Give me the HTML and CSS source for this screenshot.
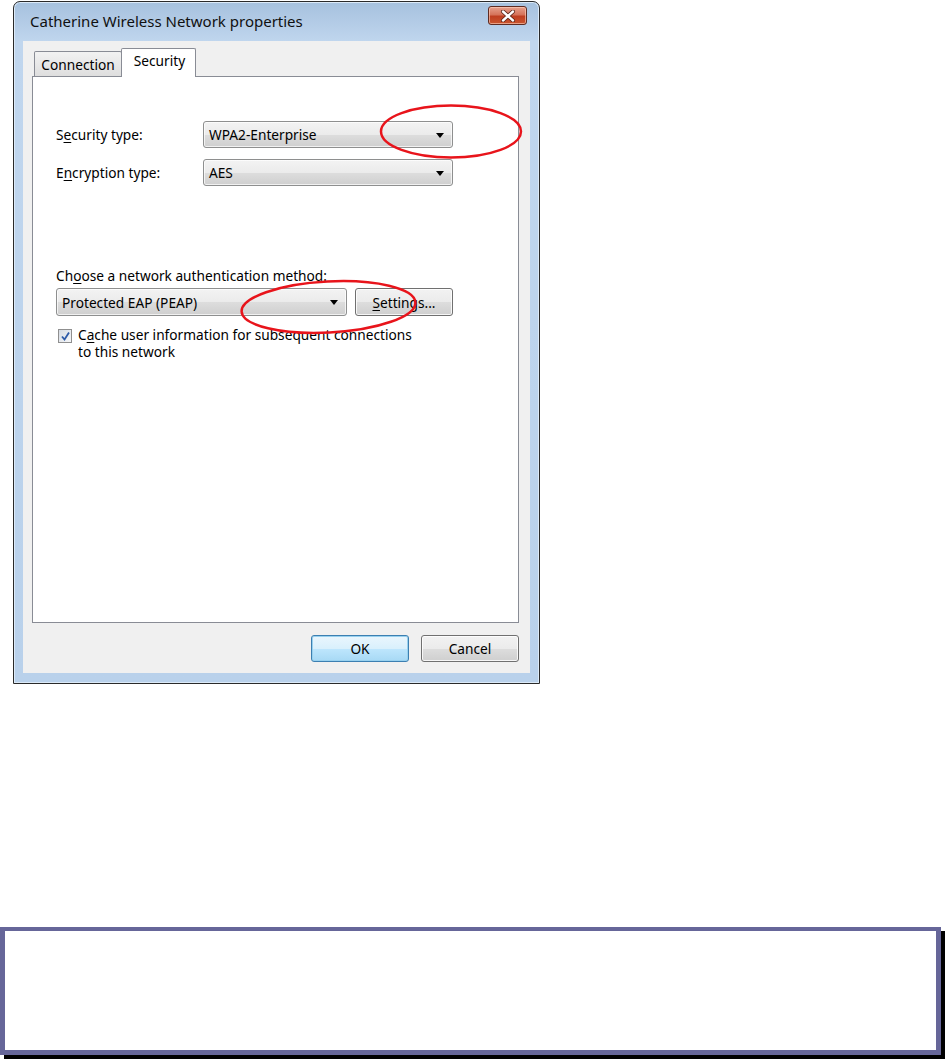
FILE: index.html
```html
<!DOCTYPE html>
<html lang="en">
<head>
    <meta charset="UTF-8">
    <meta name="viewport" content="width=device-width, initial-scale=1.0">
    <title>Catherine Wireless Network properties</title>
    <link rel="stylesheet" href="styles.css">
</head>
<body>
    <div class="window">
        <div class="titlebar">
            <span class="title">Catherine Wireless Network properties</span>
            <button class="close" title="Close">
                <svg width="16" height="12" viewBox="0 0 16 12">
                    <path d="M3 1.5 L13 10.5 M13 1.5 L3 10.5" stroke="#5a2418" stroke-width="4" stroke-linecap="round"/>
                    <path d="M3 1.5 L13 10.5 M13 1.5 L3 10.5" stroke="#ffffff" stroke-width="2.4" stroke-linecap="round"/>
                </svg>
            </button>
        </div>
        <div class="client">
            <div class="tabs">
                <div class="tab">Connection</div>
                <div class="tab selected">Security</div>
            </div>
            <div class="page">
                <div class="fields">
                    <label>S<u>e</u>curity type:</label>
                    <div class="combo">WPA2-Enterprise<span class="arrow"></span></div>
                    <label>E<u>n</u>cryption type:</label>
                    <div class="combo">AES<span class="arrow"></span></div>
                </div>
                <div class="method">Ch<u>o</u>ose a network authentication method:</div>
                <div class="methodrow">
                    <div class="combo wide">Protected EAP (PEAP)<span class="arrow"></span></div>
                    <button class="btn settings"><u>S</u>ettings...</button>
                </div>
                <div class="check">
                    <span class="box">
                        <svg width="11" height="11" viewBox="0 0 11 11">
                            <path d="M2 5.5 L4.5 8.5 L9 1.5" fill="none" stroke="#2d5aa8" stroke-width="1.8"/>
                        </svg>
                    </span>
                    <span>C<u>a</u>che user information for subsequent connections<br>to this network</span>
                </div>
            </div>
            <div class="buttons">
                <button class="btn default">OK</button>
                <button class="btn">Cancel</button>
            </div>
        </div>
    </div>

    <svg class="marks" width="560" height="360" viewBox="0 0 560 360">
        <ellipse cx="451" cy="131.5" rx="70" ry="26" fill="none" stroke="#e8141b" stroke-width="2.5"/>
        <ellipse cx="328.5" cy="307" rx="87" ry="25.5" fill="none" stroke="#e8141b" stroke-width="2.5" transform="rotate(-3 328.5 307)"/>
    </svg>

    <div class="note"></div>
</body>
</html>
```

FILE: styles.css
```css
body {
    margin: 0;
    background-color: white;
    font-family: 'Noto Sans', 'Open Sans', sans-serif;
    font-size: 13.7px;
    color: #000;
    position: relative;
    height: 1059px;
    overflow: hidden;
}
u {
    text-decoration-thickness: 1px;
    text-underline-offset: 2px;
}
.window {
    margin: 1px 0 0 13px;
    width: 525px;
    height: 681px;
    border: 1px solid #2a2a2a;
    border-radius: 7px 7px 0 0;
    background: linear-gradient(#a6c1de 0px, #c0d6ee 40px, #b9d1eb 100%);
    box-shadow: inset 0 0 0 1px #dceaf8;
    display: flex;
    flex-direction: column;
}
.titlebar {
    height: 39px;
    flex-shrink: 0;
    display: flex;
    align-items: center;
    padding: 0 12px 0 16px;
}
.title {
    font-size: 15px;
    flex: 1;
    margin-top: -2px;
    color: #101010;
}
.close {
    width: 39px;
    height: 19px;
    margin-top: -12px;
    padding: 0;
    border: 1px solid #5e2b22;
    border-radius: 3px;
    background: linear-gradient(#e7a08c 0%, #d5735a 45%, #bf3e20 55%, #c9552e 100%);
    box-shadow: inset 0 0 0 1px rgba(255, 210, 190, 0.6);
    display: flex;
    align-items: center;
    justify-content: center;
}
.client {
    flex: 1;
    margin: 0 9px 10px 9px;
    background-color: #f0f0f0;
    padding: 7px 11px 0 9px;
    display: flex;
    flex-direction: column;
}
.tabs {
    display: flex;
    align-items: flex-end;
    padding-left: 2px;
    height: 28px;
    flex-shrink: 0;
    position: relative;
    z-index: 1;
}
.tab {
    height: 25px;
    width: 88px;
    box-sizing: border-box;
    border: 1px solid #898c95;
    border-bottom: none;
    border-radius: 2px 2px 0 0;
    background: linear-gradient(#f2f2f2, #dedede);
    display: flex;
    align-items: center;
    justify-content: center;
    padding-top: 1px;
}
.tab.selected {
    width: 75px;
    height: 29px;
    margin-left: -1px;
    margin-bottom: -1px;
    background: #fff;
    padding-top: 0;
    padding-bottom: 6px;
    padding-left: 2px;
}
.page {
    height: 547px;
    flex-shrink: 0;
    box-sizing: border-box;
    border: 1px solid #898c95;
    background-color: #fff;
    padding: 44px 0 0 23px;
}
.fields {
    display: grid;
    grid-template-columns: 147px 250px;
    grid-auto-rows: 27px;
    row-gap: 11px;
    align-items: center;
}
.combo {
    height: 27px;
    box-sizing: border-box;
    border: 1px solid #8e8f8f;
    border-radius: 3px;
    background: linear-gradient(#f3f3f3 0%, #ebebeb 50%, #dddddd 51%, #cfcfcf 100%);
    box-shadow: inset 0 0 0 1px rgba(255, 255, 255, 0.7);
    display: flex;
    align-items: center;
    padding-left: 5px;
    position: relative;
}
.arrow {
    position: absolute;
    right: 8px;
    top: 11px;
    border-left: 4px solid transparent;
    border-right: 4px solid transparent;
    border-top: 5px solid #000;
}
.method {
    margin-top: 81px;
    line-height: 17px;
}
.methodrow {
    display: flex;
    gap: 8px;
    margin-top: 4px;
}
.combo.wide {
    width: 291px;
    height: 28px;
}
.btn {
    font: inherit;
    color: #000;
    height: 27px;
    border: 1px solid #707070;
    border-radius: 3px;
    background: linear-gradient(#f2f2f2 0%, #ebebeb 50%, #dddddd 51%, #cfcfcf 100%);
    box-shadow: inset 0 0 0 1px rgba(255, 255, 255, 0.8);
    padding: 0;
    width: 98px;
}
.settings {
    height: 28px;
}
.check {
    display: flex;
    gap: 6px;
    margin-top: 10px;
    margin-left: 2px;
    line-height: 17px;
}
.box {
    width: 14px;
    height: 14px;
    margin-top: 3px;
    flex-shrink: 0;
    box-sizing: border-box;
    border: 1px solid #8f8f8f;
    background: linear-gradient(135deg, #d6dbe3, #f6f7f9);
    display: flex;
    align-items: center;
    justify-content: center;
}
.buttons {
    display: flex;
    justify-content: flex-end;
    gap: 12px;
    margin-top: 12px;
}
.btn.default {
    border-color: #3c7fb1;
    background: linear-gradient(#eaf6fd 0%, #d9f0fc 50%, #bee6fd 51%, #a7d9f5 100%);
    box-shadow: inset 0 0 0 1px #98d1ef;
}
.marks {
    position: absolute;
    left: 0;
    top: 0;
}
.note {
    position: absolute;
    left: 0;
    top: 927px;
    width: 931px;
    height: 119px;
    border: 5px solid #666699;
    border-top-width: 4px;
    background: #fff;
    box-shadow: 4px 4px 0 #000;
}
```
